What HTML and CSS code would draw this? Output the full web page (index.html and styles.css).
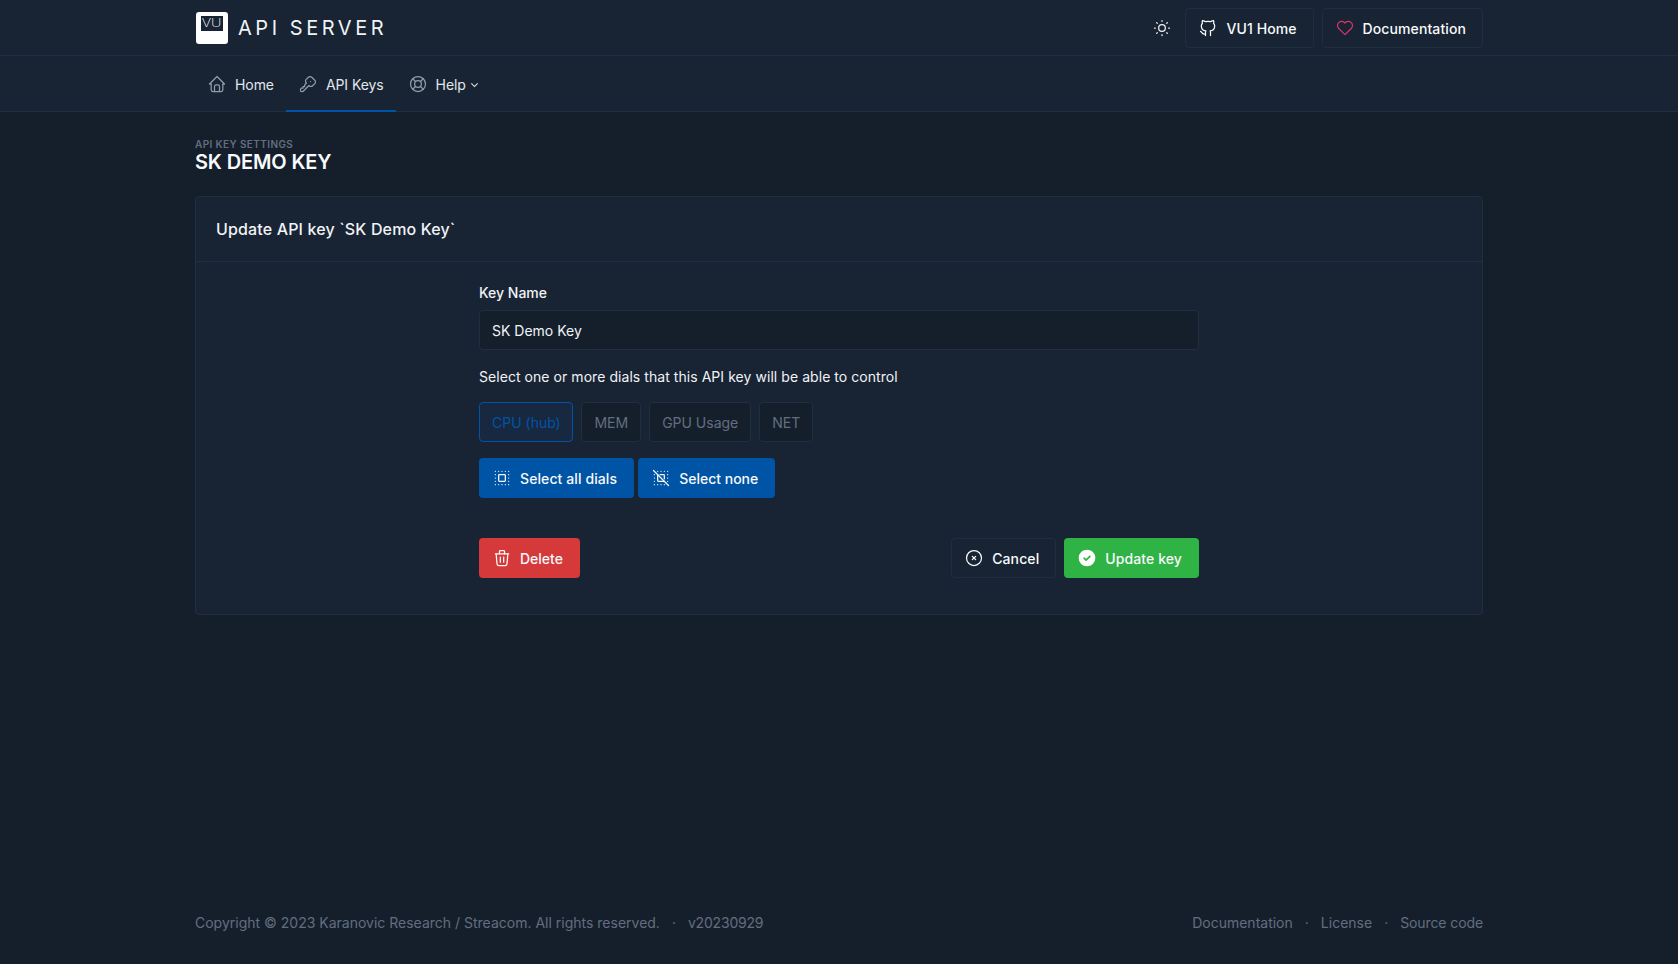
FILE: index.html
```html
<!DOCTYPE html>
<html lang="en">
	<head>
		<meta charset="utf-8">
		<title>API Server</title>
		<link rel="stylesheet" href="styles.css">
	</head>
	<body>
		<div class="page">
			<header class="topbar">
				<div class="container topbar-inner">
					<a class="brand" href="#">
						<span class="logo"><span class="logo-screen"><span class="logo-text">VU</span></span></span>
						<span class="brand-name">API SERVER</span>
					</a>
					<div class="topbar-actions">
						<a class="theme-toggle" href="#">
							<svg class="icon" viewBox="0 0 24 24"><circle cx="12" cy="12" r="4"/><path d="M3 12h1m8-9v1m8 8h1m-9 8v1M5.6 5.6l.7.7m12.1-.7l-.7.7m0 11.4l.7.7m-12.1-.7l-.7.7"/></svg>
						</a>
						<a class="btn btn-plain" href="#">
							<svg class="icon btn-icon" viewBox="0 0 24 24"><path d="M9 19c-4.3 1.4-4.3-2.5-6-3m12 5v-3.5c0-1 .1-1.4-.5-2c2.8-.3 5.5-1.4 5.5-6a4.6 4.6 0 0 0-1.3-3.2a4.2 4.2 0 0 0-.1-3.2s-1.1-.3-3.5 1.3a12.3 12.3 0 0 0-6.2 0c-2.4-1.6-3.5-1.3-3.5-1.3a4.2 4.2 0 0 0-.1 3.2a4.6 4.6 0 0 0-1.3 3.2c0 4.6 2.7 5.7 5.5 6c-.6 .6-.6 1.2-.5 2v3.5"/></svg>
							VU1 Home
						</a>
						<a class="btn btn-plain" href="#">
							<svg class="icon btn-icon icon-pink" viewBox="0 0 24 24"><path d="M19.5 12.572l-7.5 7.428l-7.5-7.428a5 5 0 1 1 7.5-6.566a5 5 0 1 1 7.5 6.572"/></svg>
							Documentation
						</a>
					</div>
				</div>
			</header>

			<nav class="navbar">
				<div class="container navbar-inner">
					<a class="nav-link" href="#">
						<span class="nav-icon"><svg class="icon" viewBox="0 0 24 24"><path d="M5 12H3l9-9l9 9h-2"/><path d="M5 12v7a2 2 0 0 0 2 2h10a2 2 0 0 0 2-2v-7"/><path d="M9 21v-6a2 2 0 0 1 2-2h2a2 2 0 0 1 2 2v6"/></svg></span>
						Home
					</a>
					<a class="nav-link active" href="#">
						<span class="nav-icon"><svg class="icon" viewBox="0 0 24 24"><path d="M16.555 3.843l3.602 3.602a2.877 2.877 0 0 1 0 4.069l-2.643 2.643a2.877 2.877 0 0 1-4.069 0l-.301-.301l-6.558 6.558a2 2 0 0 1-1.239 .578l-.175 .008h-1.172a1 1 0 0 1-.993-.883l-.007-.117v-1.172a2 2 0 0 1 .467-1.284l.119-.13l.414-.414h2v-2h2v-2l2.144-2.144l-.301-.301a2.877 2.877 0 0 1 0-4.069l2.643-2.643a2.877 2.877 0 0 1 4.069 0z"/><path d="M15 9h.01"/></svg></span>
						API Keys
					</a>
					<a class="nav-link" href="#">
						<span class="nav-icon"><svg class="icon" viewBox="0 0 24 24"><circle cx="12" cy="12" r="4"/><circle cx="12" cy="12" r="9"/><path d="M15 15l3.35 3.35"/><path d="M9 15l-3.35 3.35"/><path d="M5.65 5.65L9 9"/><path d="M18.35 5.65L15 9"/></svg></span>
						Help
						<svg class="caret" viewBox="0 0 10 6"><path d="M1.5 1.2L5 4.7l3.5-3.5"/></svg>
					</a>
				</div>
			</nav>

			<main class="container content">
				<div class="pretitle">API Key Settings</div>
				<h2 class="page-title">SK DEMO KEY</h2>

				<section class="card">
					<div class="card-header">Update API key `SK Demo Key`</div>
					<div class="card-body">
						<form class="key-form">
							<label class="form-label">Key Name</label>
							<div class="form-control">SK Demo Key</div>
							<p class="form-hint">Select one or more dials that this API key will be able to control</p>

							<div class="dial-list">
								<span class="dial selected">CPU (hub)</span>
								<span class="dial">MEM</span>
								<span class="dial">GPU Usage</span>
								<span class="dial">NET</span>
							</div>

							<div class="select-btns">
								<a class="btn btn-primary" href="#">
									<svg class="icon btn-icon" viewBox="0 0 24 24"><path d="M9 8h6a1 1 0 0 1 1 1v6a1 1 0 0 1-1 1H9a1 1 0 0 1-1-1V9a1 1 0 0 1 1-1z"/><path d="M12 20v.01M16 20v.01M8 20v.01M4 20v.01M4 16v.01M4 12v.01M4 8v.01M4 4v.01M8 4v.01M12 4v.01M16 4v.01M20 4v.01M20 8v.01M20 12v.01M20 16v.01M20 20v.01"/></svg>
									Select all dials
								</a>
								<a class="btn btn-primary btn-tight" href="#">
									<svg class="icon btn-icon" viewBox="0 0 24 24"><path d="M8 8v7a1 1 0 0 0 1 1h7"/><path d="M11 8h4a1 1 0 0 1 1 1v4"/><path d="M12 20v.01M16 20v.01M8 20v.01M4 20v.01M4 16v.01M4 12v.01M4 8v.01M8 4v.01M12 4v.01M16 4v.01M20 4v.01M20 8v.01M20 12v.01M20 16v.01"/><path d="M3 3l18 18"/></svg>
									Select none
								</a>
							</div>

							<div class="form-actions">
								<a class="btn btn-danger btn-tight" href="#">
									<svg class="icon btn-icon" viewBox="0 0 24 24"><path d="M4 7h16"/><path d="M10 11v6"/><path d="M14 11v6"/><path d="M5 7l1 12a2 2 0 0 0 2 2h8a2 2 0 0 0 2-2l1-12"/><path d="M9 7V4a1 1 0 0 1 1-1h4a1 1 0 0 1 1 1v3"/></svg>
									Delete
								</a>
								<div class="form-actions-right">
									<a class="btn btn-plain" href="#">
										<svg class="icon btn-icon" viewBox="0 0 24 24"><circle cx="12" cy="12" r="9"/><path d="M10 10l4 4m0-4l-4 4"/></svg>
										Cancel
									</a>
									<a class="btn btn-success" href="#">
										<svg class="icon btn-icon" viewBox="0 0 24 24"><circle class="icon-solid" cx="12" cy="12" r="10"/><path class="icon-tick" d="M8.5 12.2l2.4 2.4l4.6-4.6"/></svg>
										Update key
									</a>
								</div>
							</div>
						</form>
					</div>
				</section>
			</main>

			<footer class="container footer">
				<div class="footer-links">
					<span>Copyright © 2023 Karanovic Research / Streacom. All rights reserved.</span>
					<span class="dot">·</span>
					<span class="version">v20230929</span>
				</div>
				<div class="footer-links">
					<a href="#">Documentation</a>
					<span class="dot">·</span>
					<a href="#">License</a>
					<span class="dot">·</span>
					<a class="source-link" href="#">Source code</a>
				</div>
			</footer>
		</div>
	</body>
</html>
```

FILE: styles.css
```css
* {
	box-sizing: border-box;
}

body {
	margin: 0;
	background-color: #151f2c;
	color: #f0f3f6;
	font-family: Inter, "Liberation Sans", sans-serif;
	font-size: 14px;
	line-height: 20px;
}

a {
	color: inherit;
	text-decoration: none;
}

.page {
	display: flex;
	flex-direction: column;
	min-height: 964px;
}

.container {
	width: 1288px;
	margin: 0 auto;
}

.icon {
	width: 20px;
	height: 20px;
	fill: none;
	stroke: currentColor;
	stroke-width: 1.5;
	stroke-linecap: round;
	stroke-linejoin: round;
	flex: none;
}

.icon-pink {
	color: #d6336c;
}

/* top bar */
.topbar {
	height: 56px;
	background-color: #182433;
	border-bottom: 1px solid #1f2e41;
}

.topbar-inner {
	display: flex;
	justify-content: space-between;
	align-items: center;
	height: 56px;
}

.brand {
	display: flex;
	align-items: center;
	gap: 10px;
	margin-left: 1px;
}

.logo {
	display: block;
	width: 32px;
	height: 32px;
	padding: 4px 5px 0;
	background-color: #fff;
	border-radius: 3px;
}

.logo-screen {
	display: block;
	height: 15px;
	background-color: #182433;
	color: #fff;
	font-size: 11px;
	font-weight: 200;
	line-height: 15px;
	text-align: center;
}

.logo-text {
	display: inline-block;
	transform: scaleX(1.3);
}

.brand-name {
	color: #f0f3f6;
	font-size: 20px;
	font-weight: 400;
	letter-spacing: 3.55px;
}

.topbar-actions {
	display: flex;
	align-items: center;
	gap: 8px;
}

.theme-toggle {
	display: flex;
	margin-right: 5px;
}

/* buttons */
.btn {
	display: inline-flex;
	align-items: center;
	height: 40px;
	padding: 1px 16px 0;
	border: 1px solid transparent;
	border-radius: 4px;
	color: #f8fafc;
	font-weight: 500;
	letter-spacing: 0.1px;
}

.btn-tight {
	letter-spacing: 0;
}

.btn-icon {
	margin: -1px 8px 0 -4px;
}

.btn-plain {
	border-color: #1f2e41;
	background-color: #182433;
}

.btn-primary {
	background-color: #0054a6;
}

.btn-danger {
	background-color: #d63939;
}

.btn-success {
	background-color: #2fb344;
}

.icon-solid {
	fill: #fff;
	stroke: none;
}

.icon-tick {
	stroke: #2fb344;
	stroke-width: 2;
}

/* nav */
.navbar {
	height: 56px;
	background-color: #182433;
	border-bottom: 1px solid #1f2e41;
}

.navbar-inner {
	display: flex;
	height: 56px;
}

.nav-link {
	display: flex;
	align-items: center;
	padding: 3px 12px 0;
	height: 56px;
	color: #e2e7ed;
	border-bottom: 2px solid transparent;
	letter-spacing: -0.08px;
}

.nav-link.active {
	border-bottom-color: #0054a6;
}

.nav-icon {
	display: flex;
	width: 24px;
	margin: -2px 4px 0 0;
	color: #8f9bab;
}

.caret {
	width: 9px;
	height: 6px;
	margin-left: 4px;
	fill: none;
	stroke: currentColor;
	stroke-width: 1.2;
}

/* page */
.content {
	flex: 1;
	padding-top: 25px;
}

.pretitle {
	color: #626e7f;
	font-size: 10px;
	font-weight: 600;
	line-height: 14px;
	letter-spacing: 0.4px;
	text-transform: uppercase;
}

.page-title {
	margin: -1px 0 0;
	color: #f8fafc;
	font-size: 20px;
	font-weight: 600;
	line-height: 24px;
	letter-spacing: -0.14px;
}

.card {
	margin-top: 22px;
	background-color: #182433;
	border: 1px solid #1f2e41;
	border-radius: 4px;
}

.card-header {
	height: 65px;
	padding: 0 20px;
	border-bottom: 1px solid #1f2e41;
	font-size: 16px;
	font-weight: 500;
	line-height: 64px;
	letter-spacing: 0.15px;
}

.card-body {
	padding: 21px 0 36px;
}

.key-form {
	width: 720px;
	margin: 0 auto;
}

.form-label {
	display: block;
	margin-bottom: 7px;
	font-weight: 500;
}

.form-control {
	height: 40px;
	padding: 1px 12px 0;
	background-color: #151f2c;
	border: 1px solid #1f2e41;
	border-radius: 4px;
	line-height: 38px;
}

.form-hint {
	margin: 17px 0 15px;
	letter-spacing: 0.055px;
}

.dial-list {
	display: flex;
	gap: 8px;
	margin-bottom: 16px;
}

.dial {
	height: 40px;
	padding: 1px 12px 0;
	background-color: #151f2c;
	border: 1px solid #1f2e41;
	border-radius: 4px;
	color: #626e7f;
	line-height: 38px;
}

.dial.selected {
	padding-right: 11.7px;
	background-color: #182840;
	border-color: #0054a6;
	color: #0054a6;
}

.select-btns {
	display: flex;
	gap: 4px;
	margin-bottom: 40px;
}

.form-actions,
.form-actions-right {
	display: flex;
	justify-content: space-between;
}

.form-actions-right {
	gap: 8px;
}

/* footer */
.footer {
	display: flex;
	justify-content: space-between;
	padding-bottom: 31px;
	color: #626e7f;
}

.footer-links {
	display: flex;
	gap: 12px;
}

.version {
	letter-spacing: -0.2px;
}

.source-link {
	letter-spacing: -0.1px;
}
```
